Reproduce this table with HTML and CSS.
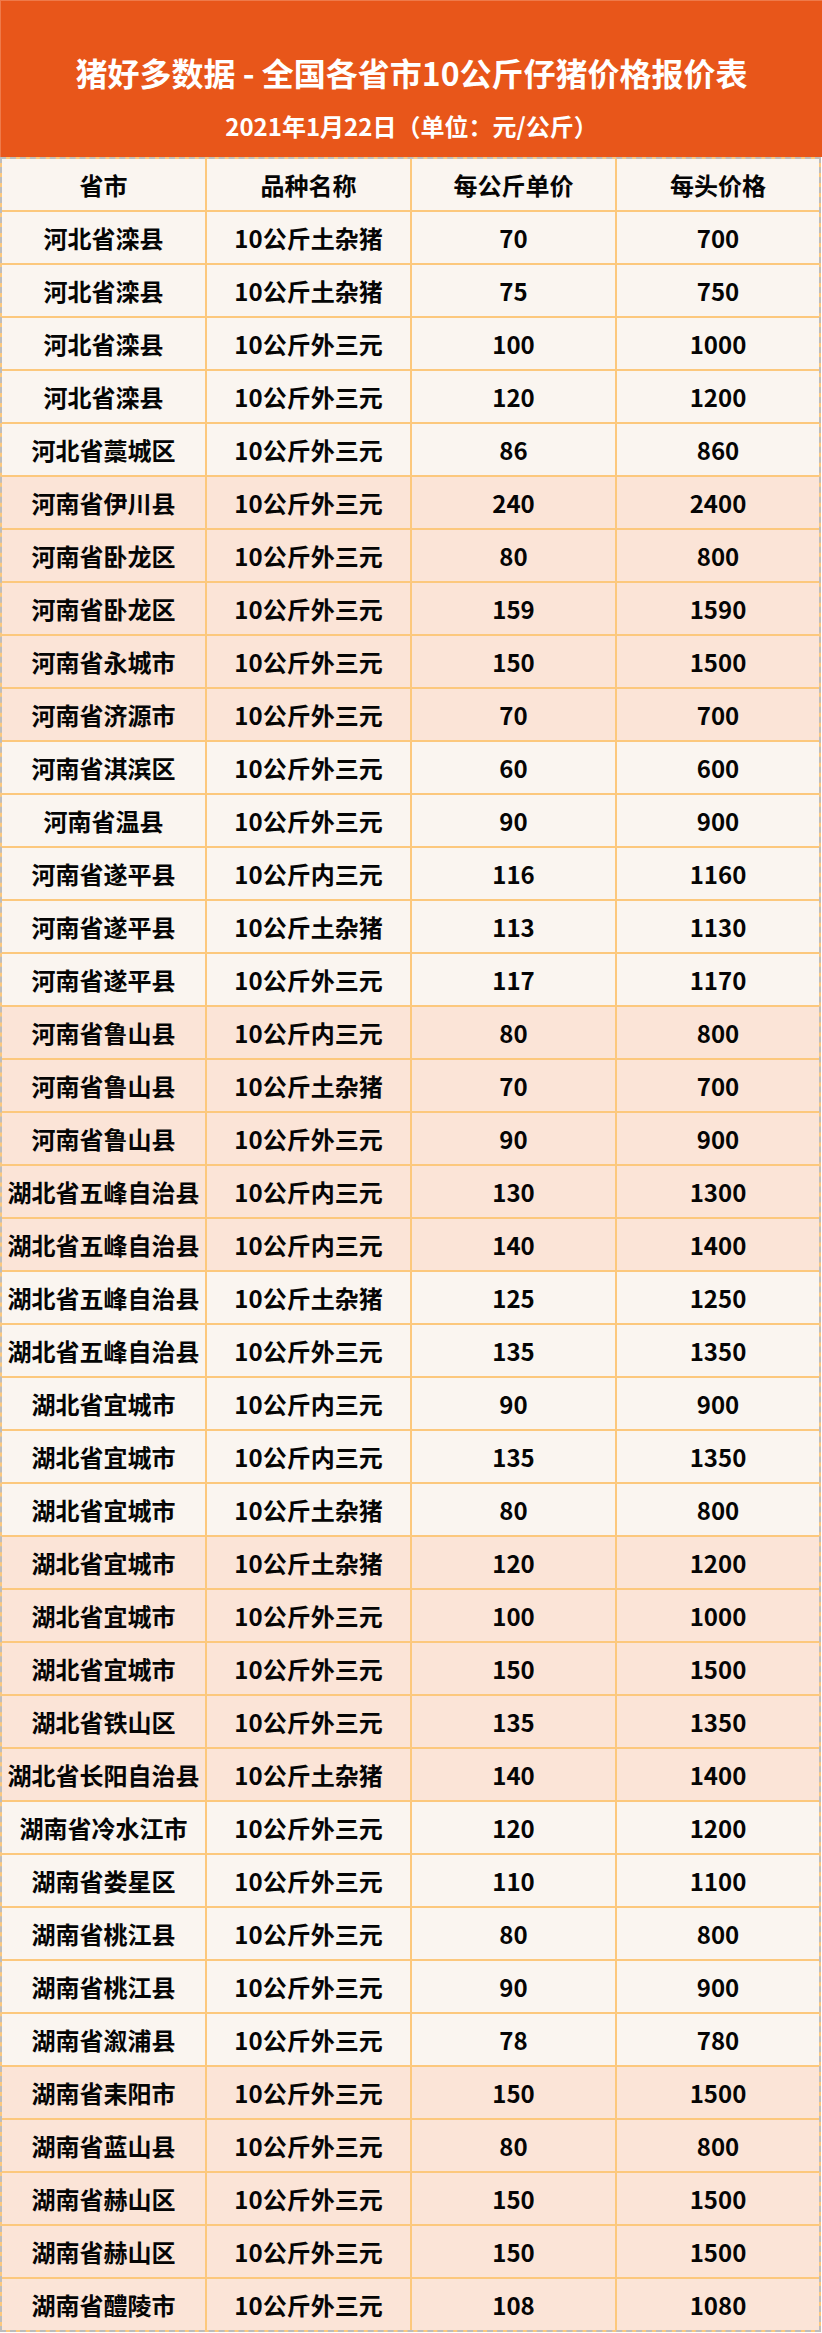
FILE: index.html
```html
<!DOCTYPE html>
<html lang="zh-CN">
<head>
<meta charset="utf-8">
<title>猪好多数据 - 全国各省市10公斤仔猪价格报价表</title>
<link rel="stylesheet" href="styles.css">
</head>
<body>
<div class="page">
  <header class="banner">
    <h1 class="title">猪好多数据 - 全国各省市10公斤仔猪价格报价表</h1>
    <p class="subtitle">2021年1月22日（单位：元/公斤）</p>
  </header>
  <div class="sheet">
    <div class="row head"><div class="cell">省市</div><div class="cell">品种名称</div><div class="cell">每公斤单价</div><div class="cell">每头价格</div></div>
    <div class="row"><div class="cell">河北省滦县</div><div class="cell">10公斤土杂猪</div><div class="cell">70</div><div class="cell">700</div></div>
    <div class="row"><div class="cell">河北省滦县</div><div class="cell">10公斤土杂猪</div><div class="cell">75</div><div class="cell">750</div></div>
    <div class="row"><div class="cell">河北省滦县</div><div class="cell">10公斤外三元</div><div class="cell">100</div><div class="cell">1000</div></div>
    <div class="row"><div class="cell">河北省滦县</div><div class="cell">10公斤外三元</div><div class="cell">120</div><div class="cell">1200</div></div>
    <div class="row"><div class="cell">河北省藁城区</div><div class="cell">10公斤外三元</div><div class="cell">86</div><div class="cell">860</div></div>
    <div class="row peach"><div class="cell">河南省伊川县</div><div class="cell">10公斤外三元</div><div class="cell">240</div><div class="cell">2400</div></div>
    <div class="row peach"><div class="cell">河南省卧龙区</div><div class="cell">10公斤外三元</div><div class="cell">80</div><div class="cell">800</div></div>
    <div class="row peach"><div class="cell">河南省卧龙区</div><div class="cell">10公斤外三元</div><div class="cell">159</div><div class="cell">1590</div></div>
    <div class="row peach"><div class="cell">河南省永城市</div><div class="cell">10公斤外三元</div><div class="cell">150</div><div class="cell">1500</div></div>
    <div class="row peach"><div class="cell">河南省济源市</div><div class="cell">10公斤外三元</div><div class="cell">70</div><div class="cell">700</div></div>
    <div class="row"><div class="cell">河南省淇滨区</div><div class="cell">10公斤外三元</div><div class="cell">60</div><div class="cell">600</div></div>
    <div class="row"><div class="cell">河南省温县</div><div class="cell">10公斤外三元</div><div class="cell">90</div><div class="cell">900</div></div>
    <div class="row"><div class="cell">河南省遂平县</div><div class="cell">10公斤内三元</div><div class="cell">116</div><div class="cell">1160</div></div>
    <div class="row"><div class="cell">河南省遂平县</div><div class="cell">10公斤土杂猪</div><div class="cell">113</div><div class="cell">1130</div></div>
    <div class="row"><div class="cell">河南省遂平县</div><div class="cell">10公斤外三元</div><div class="cell">117</div><div class="cell">1170</div></div>
    <div class="row peach"><div class="cell">河南省鲁山县</div><div class="cell">10公斤内三元</div><div class="cell">80</div><div class="cell">800</div></div>
    <div class="row peach"><div class="cell">河南省鲁山县</div><div class="cell">10公斤土杂猪</div><div class="cell">70</div><div class="cell">700</div></div>
    <div class="row peach"><div class="cell">河南省鲁山县</div><div class="cell">10公斤外三元</div><div class="cell">90</div><div class="cell">900</div></div>
    <div class="row peach"><div class="cell">湖北省五峰自治县</div><div class="cell">10公斤内三元</div><div class="cell">130</div><div class="cell">1300</div></div>
    <div class="row peach"><div class="cell">湖北省五峰自治县</div><div class="cell">10公斤内三元</div><div class="cell">140</div><div class="cell">1400</div></div>
    <div class="row"><div class="cell">湖北省五峰自治县</div><div class="cell">10公斤土杂猪</div><div class="cell">125</div><div class="cell">1250</div></div>
    <div class="row"><div class="cell">湖北省五峰自治县</div><div class="cell">10公斤外三元</div><div class="cell">135</div><div class="cell">1350</div></div>
    <div class="row"><div class="cell">湖北省宜城市</div><div class="cell">10公斤内三元</div><div class="cell">90</div><div class="cell">900</div></div>
    <div class="row"><div class="cell">湖北省宜城市</div><div class="cell">10公斤内三元</div><div class="cell">135</div><div class="cell">1350</div></div>
    <div class="row"><div class="cell">湖北省宜城市</div><div class="cell">10公斤土杂猪</div><div class="cell">80</div><div class="cell">800</div></div>
    <div class="row peach"><div class="cell">湖北省宜城市</div><div class="cell">10公斤土杂猪</div><div class="cell">120</div><div class="cell">1200</div></div>
    <div class="row peach"><div class="cell">湖北省宜城市</div><div class="cell">10公斤外三元</div><div class="cell">100</div><div class="cell">1000</div></div>
    <div class="row peach"><div class="cell">湖北省宜城市</div><div class="cell">10公斤外三元</div><div class="cell">150</div><div class="cell">1500</div></div>
    <div class="row peach"><div class="cell">湖北省铁山区</div><div class="cell">10公斤外三元</div><div class="cell">135</div><div class="cell">1350</div></div>
    <div class="row peach"><div class="cell">湖北省长阳自治县</div><div class="cell">10公斤土杂猪</div><div class="cell">140</div><div class="cell">1400</div></div>
    <div class="row"><div class="cell">湖南省冷水江市</div><div class="cell">10公斤外三元</div><div class="cell">120</div><div class="cell">1200</div></div>
    <div class="row"><div class="cell">湖南省娄星区</div><div class="cell">10公斤外三元</div><div class="cell">110</div><div class="cell">1100</div></div>
    <div class="row"><div class="cell">湖南省桃江县</div><div class="cell">10公斤外三元</div><div class="cell">80</div><div class="cell">800</div></div>
    <div class="row"><div class="cell">湖南省桃江县</div><div class="cell">10公斤外三元</div><div class="cell">90</div><div class="cell">900</div></div>
    <div class="row"><div class="cell">湖南省溆浦县</div><div class="cell">10公斤外三元</div><div class="cell">78</div><div class="cell">780</div></div>
    <div class="row peach"><div class="cell">湖南省耒阳市</div><div class="cell">10公斤外三元</div><div class="cell">150</div><div class="cell">1500</div></div>
    <div class="row peach"><div class="cell">湖南省蓝山县</div><div class="cell">10公斤外三元</div><div class="cell">80</div><div class="cell">800</div></div>
    <div class="row peach"><div class="cell">湖南省赫山区</div><div class="cell">10公斤外三元</div><div class="cell">150</div><div class="cell">1500</div></div>
    <div class="row peach"><div class="cell">湖南省赫山区</div><div class="cell">10公斤外三元</div><div class="cell">150</div><div class="cell">1500</div></div>
    <div class="row peach"><div class="cell">湖南省醴陵市</div><div class="cell">10公斤外三元</div><div class="cell">108</div><div class="cell">1080</div></div>
  </div>
</div>
</body>
</html>
```
FILE: styles.css
```css
html, body {
  margin: 0;
  padding: 0;
  background: #ffffff;
}

.page {
  width: 822px;
  font-family: "Noto Sans CJK SC", "Noto Sans", sans-serif;
  font-weight: 700;
}

.banner {
  height: 157px;
  box-sizing: border-box;
  background: #e8561a;
  color: #ffffff;
  display: flex;
  flex-direction: column;
  align-items: center;
  padding-top: 50px;
  border-top: 1px solid #ee7a4a;
  border-left: 1px solid #ee7a4a;
}

.title {
  margin: 0;
  font-size: 32px;
  line-height: 42px;
  font-weight: 700;
  white-space: nowrap;
}

.subtitle {
  margin: 17px 0 0 0;
  font-size: 24px;
  line-height: 32px;
  font-weight: 700;
  white-space: nowrap;
}

.sheet {
  width: 821px;
  box-sizing: border-box;
  border: 2px dashed #bdbdbd;
  display: flex;
  flex-direction: column;
  gap: 2px;
  background: #fcc87d;
}

.row {
  display: grid;
  grid-template-columns: 203px 203px 203px 1fr;
  gap: 2px;
  height: 51px;
}

.cell {
  background: #faf5f0;
  color: #050505;
  font-size: 24px;
  line-height: 51px;
  text-align: center;
  white-space: nowrap;
  overflow: hidden;
}

.row.peach .cell {
  background: #fbe4d7;
}
```
